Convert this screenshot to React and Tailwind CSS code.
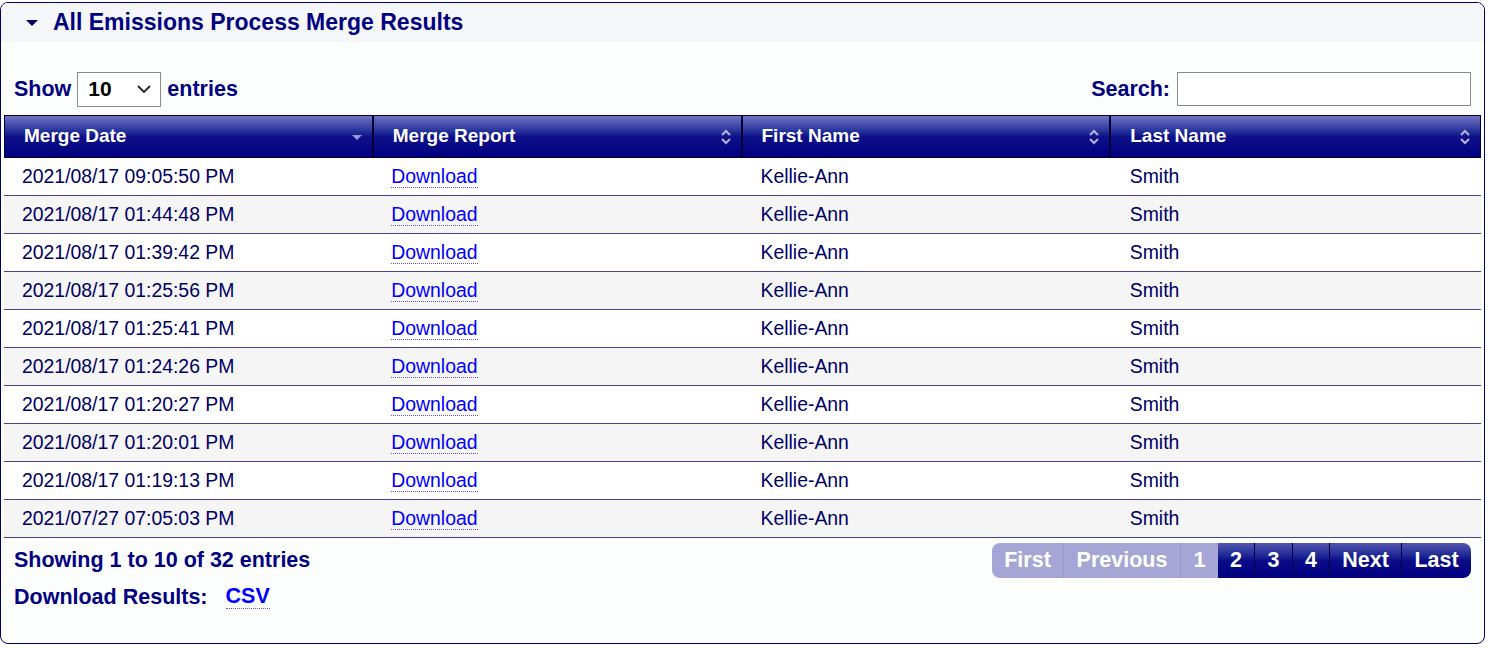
import { useState } from "react";

const rows = [
  "2021/08/17 09:05:50 PM",
  "2021/08/17 01:44:48 PM",
  "2021/08/17 01:39:42 PM",
  "2021/08/17 01:25:56 PM",
  "2021/08/17 01:25:41 PM",
  "2021/08/17 01:24:26 PM",
  "2021/08/17 01:20:27 PM",
  "2021/08/17 01:20:01 PM",
  "2021/08/17 01:19:13 PM",
  "2021/07/27 07:05:03 PM",
];

function SortIcon({ down }) {
  if (down) {
    return (
      <svg width="14" height="14" viewBox="0 0 14 14" className="shrink-0">
        <path d="M2 5 L12 5 L7 10 Z" fill="#9a9ad0" />
      </svg>
    );
  }
  return (
    <svg width="14" height="20" viewBox="0 0 14 20" className="shrink-0">
      <path d="M3 8 L7 4 L11 8" fill="none" stroke="#b4b4dc" strokeWidth="2" />
      <path d="M3 12 L7 16 L11 12" fill="none" stroke="#b4b4dc" strokeWidth="2" />
    </svg>
  );
}

export default function App() {
  const [search, setSearch] = useState("");
  const cols = ["Merge Date", "Merge Report", "First Name", "Last Name"];
  const pages = [
    { t: "2", w: "w-[37px]" },
    { t: "3", w: "w-[38px]" },
    { t: "4", w: "w-[37px]" },
    { t: "Next", w: "w-[72px]" },
    { t: "Last", w: "w-[69px]" },
  ];

  return (
    <div
      className="w-[1488px] h-[648px] bg-white pt-[2px]"
      style={{ fontFamily: '"Liberation Sans", Arial, sans-serif' }}
    >
      <div className="w-[1485px] h-[642px] border border-[#000066] rounded-lg bg-[#fcfefe] overflow-hidden">
        {/* panel header */}
        <div className="h-[39px] bg-[#f4f6f9] flex items-center pl-[24px] gap-[14px]">
          <svg width="14" height="10" viewBox="0 0 14 10">
            <path d="M1 2 L13 2 L7 8 Z" fill="#000066" />
          </svg>
          <span className="text-[23px] font-bold text-[#000080]">
            All Emissions Process Merge Results
          </span>
        </div>

        {/* controls */}
        <div className="flex items-center justify-between pl-[13px] pr-[13px] mt-[29px] h-[36px]">
          <div className="flex items-center gap-[6px] text-[21.5px] font-bold text-[#000080]">
            <span>Show</span>
            <div className="w-[84px] h-[35px] border border-[#8a8a8a] bg-white flex items-center justify-between pl-[10px] pr-[8px]">
              <span className="text-[21px] font-bold text-black">10</span>
              <svg width="16" height="10" viewBox="0 0 16 10">
                <path d="M2 2 L8 8 L14 2" fill="none" stroke="#222" strokeWidth="1.8" />
              </svg>
            </div>
            <span>entries</span>
          </div>
          <div className="flex items-center gap-[7px] text-[21.5px] font-bold text-[#000080]">
            <span>Search:</span>
            <input
              value={search}
              onChange={(e) => setSearch(e.target.value)}
              className="w-[294px] h-[34px] border border-[#8a8a8a] bg-white outline-none px-2"
            />
          </div>
        </div>

        {/* table */}
        <div className="mx-[3px] mt-[8px] w-[1477px]">
          <div className="grid grid-cols-4 h-[43px] border border-[#000033] bg-gradient-to-b from-[#7373c2] via-[#10108a] to-[#000080]">
            {cols.map((c, i) => (
              <div
                key={c}
                className={`flex items-center justify-between pl-[19px] pr-[8px] ${i < 3 ? "border-r-2 border-[#000033]" : ""}`}
              >
                <span className="text-[19px] font-bold text-white">{c}</span>
                <SortIcon down={i === 0} />
              </div>
            ))}
          </div>
          {rows.map((d, i) => (
            <div
              key={i}
              className={`grid grid-cols-4 h-[38px] border-b border-[#4a3f96] text-[19.4px] text-[#000066] ${i % 2 ? "bg-[#f5f5f5]" : "bg-white"}`}
            >
              <div className="flex items-center pl-[18px]">{d}</div>
              <div className="flex items-center pl-[18px]">
                <a
                  href="#"
                  className="text-[#0000ff] border-b border-dotted border-[#6a4fd8] leading-[22px]"
                >
                  Download
                </a>
              </div>
              <div className="flex items-center pl-[18px]">Kellie-Ann</div>
              <div className="flex items-center pl-[18px]">Smith</div>
            </div>
          ))}
        </div>

        {/* footer */}
        <div className="flex justify-between pl-[13px] pr-[13px] mt-[4px]">
          <div className="flex flex-col">
            <div className="h-[36px] flex items-center text-[21.5px] font-bold text-[#000080]">
              Showing 1 to 10 of 32 entries
            </div>
            <div className="h-[38px] flex items-center text-[21.5px] font-bold text-[#000080]">
              <span>Download Results:</span>
              <a
                href="#"
                className="ml-[18px] text-[#0000ff] border-b border-dotted border-[#6a4fd8] leading-[23px]"
              >
                CSV
              </a>
            </div>
          </div>
          <div className="flex h-[35px] mt-[1px] rounded-lg overflow-hidden text-[21.5px] font-bold text-white">
            <div className="flex bg-[#a6a6d6]">
              <span className="w-[72px] flex items-center justify-center border-r border-[#9898c8]">First</span>
              <span className="w-[117px] flex items-center justify-center border-r border-[#9898c8]">Previous</span>
              <span className="w-[37px] flex items-center justify-center">1</span>
            </div>
            {pages.map((p, i) => (
              <span
                key={p.t}
                className={`${p.w} flex items-center justify-center bg-gradient-to-b from-[#5555b0] via-[#0c0c88] to-[#000080] ${i < 4 ? "border-r border-[#000044]" : ""}`}
              >
                {p.t}
              </span>
            ))}
          </div>
        </div>
      </div>
    </div>
  );
}
